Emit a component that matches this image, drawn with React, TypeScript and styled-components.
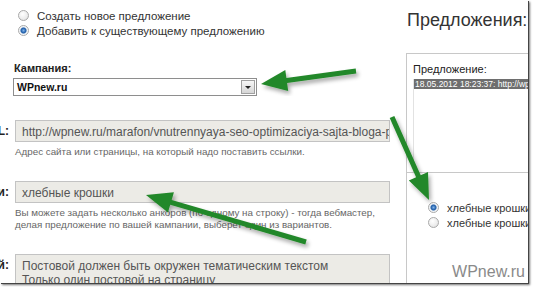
import styled, { createGlobalStyle } from 'styled-components';

const GlobalStyle = createGlobalStyle`
  html, body {
    margin: 0;
    padding: 0;
    background: #fff;
    overflow: hidden;
  }
`;

const Page = styled.div`
  position: relative;
  width: 534px;
  height: 287px;
  overflow: hidden;
  background: #fff;
  font-family: "Liberation Sans", Arial, sans-serif;
`;

const Frame = styled.div`
  width: 528px;
  height: 283px;
  display: flex;
  overflow: hidden;
  background: #fff;
  box-shadow: 1px 1px 0 #444, 2px 2px 2px rgba(0, 0, 0, 0.55);
`;

const LeftCol = styled.div`
  width: 406px;
  flex-shrink: 0;
  display: flex;
  flex-direction: column;
`;

const RadioGroup = styled.div`
  display: flex;
  flex-direction: column;
  padding: 8px 0 0 18px;
`;

const RadioRow = styled.label<{ $size?: number }>`
  display: flex;
  align-items: center;
  gap: 8px;
  height: 15px;
  font-size: ${p => p.$size ?? 11.5}px;
  color: #333;
  white-space: nowrap;
`;

const Radio = styled.span<{ $checked?: boolean }>`
  width: 11px;
  height: 11px;
  box-sizing: border-box;
  border-radius: 50%;
  border: 1px solid #a9a9a9;
  flex-shrink: 0;
  background: ${p =>
    p.$checked
      ? 'radial-gradient(circle, #7fb2e8 0, #1c5aa6 2.5px, #e9eef3 3.5px, #fff 5px)'
      : 'radial-gradient(circle at 40% 35%, #fff 0, #ececec 60%, #d6d6d6 100%)'};
`;

const CampaignBlock = styled.div`
  display: flex;
  flex-direction: column;
  padding: 23px 0 0 13px;
`;

const BoldLabel = styled.div`
  font-size: 11px;
  font-weight: bold;
  color: #222;
  height: 14px;
  line-height: 14px;
  padding-left: 1px;
`;

const Select = styled.div`
  margin-top: 3px;
  width: 244px;
  height: 18px;
  box-sizing: border-box;
  border: 1px solid #8e8e8e;
  display: flex;
  align-items: center;
  justify-content: space-between;
  padding: 0 1px 0 3px;
  font-size: 10.5px;
  font-weight: bold;
  color: #111;
`;

const DropButton = styled.span`
  width: 14px;
  height: 14px;
  box-sizing: border-box;
  border: 1px solid #a0a0a0;
  background: linear-gradient(#f6f6f6, #d6d6d6);
  display: flex;
  align-items: center;
  justify-content: center;
  &::after {
    content: '';
    margin-top: 1px;
    border-left: 3px solid transparent;
    border-right: 3px solid transparent;
    border-top: 3px solid #222;
  }
`;

const FormGrid = styled.div`
  display: grid;
  grid-template-columns: 100px 375px;
  column-gap: 6px;
  margin: 24px 0 0 -91px;
`;

const FieldLabel = styled.div`
  text-align: right;
  font-size: 12px;
  font-weight: bold;
  color: #222;
  line-height: 22px;
  white-space: nowrap;
`;

const FieldBody = styled.div<{ $gap?: number }>`
  display: flex;
  flex-direction: column;
  margin-bottom: ${p => p.$gap ?? 0}px;
`;

const Input = styled.div<{ $lines?: number }>`
  height: ${p => (p.$lines ?? 1) * 14 + 8}px;
  box-sizing: border-box;
  border: 1px solid #c3c3c3;
  background: #ecebe6;
  padding: 4px 6px 3px;
  font-size: 12px;
  line-height: 14px;
  color: #555;
  white-space: nowrap;
  overflow: hidden;
`;

const Hint = styled.div`
  font-size: 9.8px;
  line-height: 12px;
  color: #666;
  padding-top: 4px;
  white-space: nowrap;
`;

const RightCol = styled.div`
  flex: 1;
  min-width: 0;
  display: flex;
  flex-direction: column;
  position: relative;
`;

const Title = styled.div`
  font-size: 18px;
  color: #333;
  padding: 10px 0 0 1px;
  height: 53px;
  box-sizing: border-box;
  white-space: nowrap;
`;

const Panel = styled.div`
  flex: 1;
  border-left: 1px solid #c8c8c8;
  border-top: 1px solid #c8c8c8;
  display: flex;
  flex-direction: column;
`;

const ListSection = styled.div`
  height: 119px;
  box-sizing: border-box;
  border-bottom: 1px solid #c8c8c8;
  padding: 8px 0 0 6px;
  display: flex;
  flex-direction: column;
`;

const PanelLabel = styled.div`
  font-size: 11px;
  color: #222;
  height: 14px;
  line-height: 14px;
`;

const ListBox = styled.div`
  margin-top: 3px;
  flex: 1;
  border-left: 1px solid #e2e2e2;
`;

const ListItem = styled.div<{ $selected?: boolean }>`
  height: 10px;
  line-height: 10px;
  font-size: 8.5px;
  color: ${p => (p.$selected ? '#fff' : '#222')};
  background: ${p => (p.$selected ? '#6e6e6e' : 'transparent')};
  padding-left: 1px;
  white-space: nowrap;
`;

const Choices = styled.div`
  display: flex;
  flex-direction: column;
  padding: 27px 0 0 21px;
`;

const Watermark = styled.div`
  position: absolute;
  right: 3px;
  bottom: 2px;
  font-size: 16px;
  color: #8a8a8a;
`;

const ArrowLayer = styled.svg`
  position: absolute;
  inset: 0;
  pointer-events: none;
`;

type Pt = [number, number];

function arrowPoints(tail: Pt, tip: Pt, shaft = 5, headLen = 26, headW = 21) {
  const dx = tip[0] - tail[0];
  const dy = tip[1] - tail[1];
  const len = Math.hypot(dx, dy);
  const ux = dx / len;
  const uy = dy / len;
  const nx = -uy;
  const ny = ux;
  const bx = tip[0] - ux * headLen;
  const by = tip[1] - uy * headLen;
  const pts: Pt[] = [
    [tail[0] + nx * shaft / 2, tail[1] + ny * shaft / 2],
    [bx + nx * shaft / 2, by + ny * shaft / 2],
    [bx + nx * headW / 2, by + ny * headW / 2],
    tip,
    [bx - nx * headW / 2, by - ny * headW / 2],
    [bx - nx * shaft / 2, by - ny * shaft / 2],
    [tail[0] - nx * shaft / 2, tail[1] - ny * shaft / 2],
  ];
  return pts.map(p => `${p[0].toFixed(1)},${p[1].toFixed(1)}`).join(' ');
}

const arrows: { tail: Pt; tip: Pt }[] = [
  { tail: [356, 71], tip: [261, 84] },
  { tail: [392, 117], tip: [429, 200] },
  { tail: [306, 242], tip: [146, 195] },
];

function App() {
  return (
    <Page>
      <GlobalStyle />
      <Frame>
        <LeftCol>
          <RadioGroup>
            <RadioRow>
              <Radio />
              Создать новое предложение
            </RadioRow>
            <RadioRow>
              <Radio $checked />
              Добавить к существующему предложению
            </RadioRow>
          </RadioGroup>

          <CampaignBlock>
            <BoldLabel>Кампания:</BoldLabel>
            <Select>
              WPnew.ru
              <DropButton />
            </Select>
          </CampaignBlock>

          <FormGrid>
            <FieldLabel>URL:</FieldLabel>
            <FieldBody $gap={23}>
              <Input>http://wpnew.ru/marafon/vnutrennyaya-seo-optimizaciya-sajta-bloga-po-seo</Input>
              <Hint>Адрес сайта или страницы, на который надо поставить ссылки.</Hint>
            </FieldBody>

            <FieldLabel>Анкоры ссылки:</FieldLabel>
            <FieldBody $gap={23}>
              <Input>хлебные крошки</Input>
              <Hint>
                Вы можете задать несколько анкоров (по одному на строку) - тогда вебмастер,
                <br />
                делая предложение по вашей кампании, выберет один из вариантов.
              </Hint>
            </FieldBody>

            <FieldLabel>Комментарий:</FieldLabel>
            <FieldBody>
              <Input $lines={2}>
                Постовой должен быть окружен тематическим текстом
                <br />
                Только один постовой на страницу
              </Input>
            </FieldBody>
          </FormGrid>
        </LeftCol>

        <RightCol>
          <Title>Предложения:</Title>
          <Panel>
            <ListSection>
              <PanelLabel>Предложение:</PanelLabel>
              <ListBox>
                <ListItem $selected>18.05.2012 18:23:37: http://wpnew.ru/marafon/</ListItem>
              </ListBox>
            </ListSection>
            <Choices>
              <RadioRow $size={11}>
                <Radio $checked />
                хлебные крошки
              </RadioRow>
              <RadioRow $size={11}>
                <Radio />
                хлебные крошки что это
              </RadioRow>
            </Choices>
          </Panel>
          <Watermark>WPnew.ru</Watermark>
        </RightCol>
      </Frame>

      <ArrowLayer width={534} height={287} viewBox="0 0 534 287">
        <defs>
          <filter id="arrowShadow" x="-20%" y="-20%" width="140%" height="140%">
            <feGaussianBlur in="SourceAlpha" stdDeviation="2" />
            <feOffset dx="2" dy="3" result="blur" />
            <feComponentTransfer>
              <feFuncA type="linear" slope="0.35" />
            </feComponentTransfer>
            <feMerge>
              <feMergeNode />
              <feMergeNode in="SourceGraphic" />
            </feMerge>
          </filter>
        </defs>
        {arrows.map((a, i) => (
          <polygon
            key={i}
            points={arrowPoints(a.tail, a.tip)}
            fill="#24882a"
            filter="url(#arrowShadow)"
          />
        ))}
      </ArrowLayer>
    </Page>
  );
}

export default App;
